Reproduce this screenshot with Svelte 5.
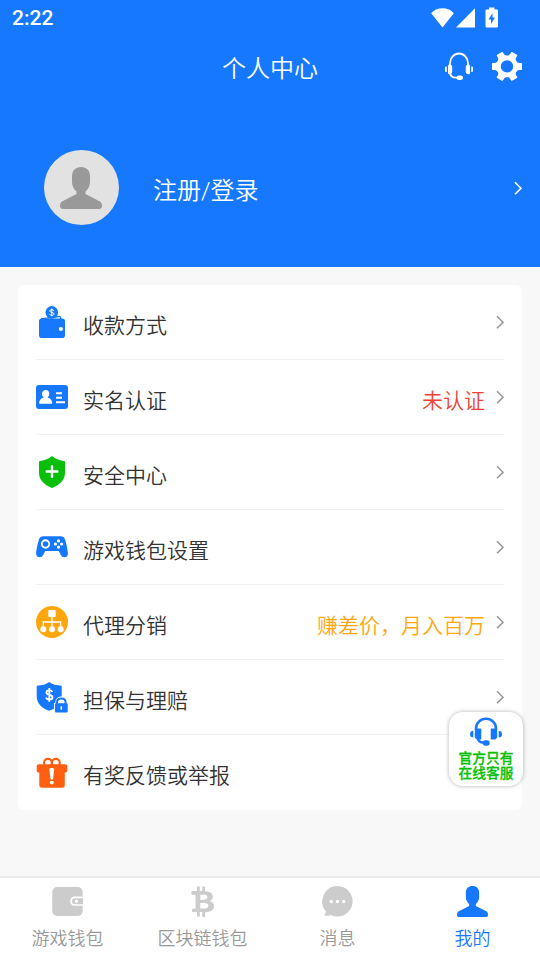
<script lang="ts">
    const menu = [
        { icon: 'wallet', label: '收款方式' },
        { icon: 'idcard', label: '实名认证', note: '未认证', tone: 'red' },
        { icon: 'shield', label: '安全中心' },
        { icon: 'gamepad', label: '游戏钱包设置' },
        { icon: 'tree', label: '代理分销', note: '赚差价，月入百万', tone: 'orange' },
        { icon: 'guard', label: '担保与理赔' },
        { icon: 'gift', label: '有奖反馈或举报' },
    ];
    const tabs = [
        { icon: 'purse', label: '游戏钱包' },
        { icon: 'bitcoin', label: '区块链钱包' },
        { icon: 'chat', label: '消息' },
        { icon: 'person', label: '我的' },
    ];
    let active = $state(3);
</script>

{#snippet person()}
    <path d="M21 0C15.500 0 12 3.500 12 9.500v5.500c0 4 2 7.500 4.500 9.500v2.500L3 34c-2 1-3 2.500-3 4.500C0 41 1 42 3 42h36c2 0 3-1 3-3.500 0-2-1-3.500-3-4.500l-13.500-7v-2.500c2.500-2 4.500-5.500 4.500-9.500V9.500C30 3.500 26.500 0 21 0z" />
{/snippet}

{#snippet chevron()}
    <svg class="chevron" width="8" height="14" viewBox="0 0 8 14"><path d="M1 1.300l6 6-6 6" /></svg>
{/snippet}

<div class="page">
    <header>
        <div class="status">
            <span>2:22</span>
            <svg width="70" height="22" viewBox="0 0 70 22" fill="#fff">
                <path d="M11.500 21.500L.2 7.200C3 4.200 7 2.300 11.500 2.300S20 4.200 22.800 7.200z" />
                <path d="M44 2.300v19.200H25z" />
                <path fill-rule="evenodd" d="M58 1.500h5.500v2h2.200c.8 0 1.300.5 1.300 1.300v15.400c0 .8-.5 1.300-1.300 1.300h-9.900c-.8 0-1.300-.5-1.300-1.300V4.800c0-.8.5-1.300 1.300-1.300H58zM61.500 7l-4 6.500h2.500V18l4-6.500h-2.500z" />
            </svg>
        </div>
        <div class="titlebar">
            <h1>个人中心</h1>
            <div class="actions">
                <svg width="28" height="29" viewBox="0 0 28 29">
                    <path d="M5 15V11.500a9 10 0 0 1 18 0V15M5 20c0 4 2 5.700 6 5.700h3" fill="none" stroke="#fff" stroke-width="1.800" />
                    <path fill="#fff" d="M4.500 12.500c2 0 2.700 1 2.700 2.500v4.500c0 1.700-.8 2.700-2.700 2.700-.9 0-1.500-.5-1.500-1.500V14c0-1 .6-1.500 1.500-1.500zM23.500 12.500c-2 0-2.700 1-2.700 2.500v4.500c0 1.700.8 2.700 2.700 2.700.9 0 1.500-.5 1.500-1.500V14c0-1-.6-1.500-1.500-1.500zM0 15.500c0-.6.5-1 1.800-1v5.500C.5 20 0 19.600 0 19zM28 15.500c0-.6-.5-1-1.800-1v5.500c1.300 0 1.800-.4 1.800-1z" />
                    <rect x="11.500" y="23.500" width="6.500" height="4.500" rx="2.200" fill="#fff" />
                </svg>
                <svg width="30" height="30" viewBox="-15 -15.400 30 30">
                    <circle r="8.500" fill="none" stroke="#fff" stroke-width="4.600" />
                    {#each [0, 60, 120, 180, 240, 300] as angle}
                        <path fill="#fff" transform="rotate({angle})" d="M8-6.500c1.300 2 2.800 3 4.500 3h1.800c.5 0 .7.300.7.700v5.600c0 .4-.2.700-.7.700h-1.800c-1.700 0-3.200 1-4.500 3z" />
                    {/each}
                </svg>
            </div>
        </div>
        <div class="profile">
            <div class="avatar">
                <svg width="42" height="42" viewBox="0 0 42 42" fill="#999">{@render person()}</svg>
            </div>
            <span class="login">注册/登录</span>
            {@render chevron()}
        </div>
    </header>

    <main>
        {#each menu as item}
            <div class="row">
                <svg class="icon" width="32" height="32" viewBox="0 0 32 32">
                    {#if item.icon === 'wallet'}
                        <path d="M5 12.800l18-2.300c1.200-.1 1.700.6 1.700 1.500v1.500" fill="none" stroke="#1678ff" stroke-width="1.300" />
                        <circle cx="15.800" cy="6.400" r="6.300" fill="#1678ff" />
                        <path class="dollar" d="M18 4.800c-.4-.8-1.200-1.100-2.200-1.100-1.200 0-2 .5-2 1.300 0 2 4.200.8 4.200 2.900 0 .9-.9 1.400-2.100 1.400-1.100 0-2-.4-2.300-1.200M15.800 2.500v7.800" stroke-width="1" />
                        <rect x="3" y="12.500" width="26" height="19.500" rx="2.800" fill="#1678ff" />
                        <circle cx="24.900" cy="23" r="2.100" fill="#fff" />
                    {:else if item.icon === 'idcard'}
                        <rect y="4" width="32" height="24" rx="3" fill="#1678ff" />
                        <path fill="#fff" d="M9.700 9c2.200 0 3.600 1.500 3.600 3.800 0 1.600-.7 3-1.800 3.800 2.900.8 4.500 2.500 4.700 5.300 0 .5-.3.900-.9.900H4c-.6 0-.9-.4-.9-.9.200-2.800 1.800-4.500 4.700-5.300-1.100-.8-1.800-2.200-1.800-3.800C6 10.500 7.500 9 9.700 9z" />
                        <path d="M20 12.200h6M20 16.800h6M20 21.200h9" stroke="#fff" stroke-width="1.900" />
                    {:else if item.icon === 'shield'}
                        <path fill="#09bf09" d="M16 0c3.500 2.900 8 4.700 13 5.200V17c0 7-5.500 12-13 15C8.500 29 3 24 3 17V5.200C8 4.700 12.500 2.900 16 0z" />
                        <path d="M16 10.200v10.600M10.700 15.500h10.600" stroke="#fff" stroke-width="2.400" stroke-linecap="round" />
                    {:else if item.icon === 'gamepad'}
                        <path fill="#1678ff" d="M7.500 5.300h17c2.700 0 4.200 1.500 4.800 4 1.200 4.400 2.400 9 2.600 13 .1 2.500-1.400 4-3.500 4-1.700 0-2.900-.8-3.700-2.500l-2-3.800H9.300l-2 3.800c-.8 1.700-2 2.500-3.700 2.500-2.100 0-3.600-1.500-3.500-4 .2-4 1.400-8.600 2.600-13 .6-2.500 2.100-4 4.800-4z" />
                        <circle cx="9.500" cy="13" r="3.700" fill="none" stroke="#fff" stroke-width="1.900" />
                        <g fill="#fff"><circle cx="22.500" cy="9.900" r="1.600" /><circle cx="22.500" cy="16.100" r="1.600" /><circle cx="19.400" cy="13" r="1.600" /><circle cx="25.600" cy="13" r="1.600" /></g>
                    {:else if item.icon === 'tree'}
                        <circle cx="16" cy="16" r="16" fill="#ffa60d" />
                        <rect x="12.300" y="4" width="7.400" height="7" rx="1" fill="#fff" />
                        <path d="M16 11v10M7.300 21v-5h17.400v5" fill="none" stroke="#fff" stroke-width="1.300" />
                        <g fill="#fff"><circle cx="7.300" cy="23.300" r="3" /><circle cx="16" cy="23.300" r="3" /><circle cx="24.700" cy="23.300" r="3" /></g>
                    {:else if item.icon === 'guard'}
                        <path fill="#1678ff" d="M13.200 1c3 2.300 7 3.500 12.500 3.700V15c0 7.500-5 12.300-12.500 14.800C5.700 27.300.7 22.500.7 15V4.700C6.200 4.500 10.200 3.300 13.200 1z" />
                        <path class="dollar" d="M16.300 11c-.5-1.200-1.500-1.700-3-1.700-1.800 0-2.900.8-2.900 2.200 0 3.200 6.100 1.500 6.100 4.700 0 1.500-1.300 2.300-3.100 2.300-1.700 0-2.900-.6-3.300-2M13.300 7v13.800" stroke-width="1.800" />
                        <path d="M18 32V22h1.300c.2-4 2.300-6.500 6-6.500s5.900 2.500 6.100 6.500H32v10z" fill="#fff" />
                        <rect x="19" y="22.300" width="12.700" height="9.200" rx="1" fill="#1678ff" />
                        <path d="M21 23v-1.500c0-2.500 1.700-4 4.300-4s4.300 1.500 4.300 4V23" fill="none" stroke="#1678ff" stroke-width="2" />
                        <path d="M25.300 25.300v3.300" stroke="#fff" stroke-width="1.600" />
                    {:else}
                        <g fill="none" stroke="#ff5f11" stroke-width="2.200"><circle cx="12" cy="6.800" r="4" /><circle cx="19.800" cy="6.800" r="4" /></g>
                        <path fill="#ff5f11" d="M3 8.300h26c1.500 0 2.300.9 2.300 2.200v4c0 1.300-.8 2.200-2.500 2.200v12.500c0 1.600-1 2.500-2.500 2.500H5.800c-1.500 0-2.500-.9-2.500-2.500V16.700C1.500 16.700.7 15.800.7 14.500v-4c0-1.300.8-2.200 2.300-2.200z" />
                        <path fill="#fff" d="M13.400 13.500c0-1 .8-1.500 2.400-1.500s2.400.5 2.400 1.500l-1.100 9c-.1.900-.5 1.300-1.300 1.300s-1.200-.4-1.300-1.300z" />
                        <circle cx="15.800" cy="26.600" r="1.900" fill="#fff" />
                    {/if}
                </svg>
                <span class="label">{item.label}</span>
                {#if item.note}<span class="note {item.tone}">{item.note}</span>{/if}
                {@render chevron()}
            </div>
        {/each}
    </main>

    <nav>
        {#each tabs as tab, i}
            <button class:active={i === active} onclick={() => (active = i)}>
                {#if tab.icon === 'person'}
                    <svg width="31" height="31" viewBox="0 0 42 42">{@render person()}</svg>
                {:else}
                    <svg width="31" height="31" viewBox="0 0 31 31">
                        {#if tab.icon === 'purse'}
                            <rect x=".3" y="1" width="30.400" height="29" rx="5" />
                            <path fill="#fff" d="M31 10.600h-8c-3 0-4.900 1.900-4.900 4.600s1.900 4.600 4.900 4.600h8z" />
                            <path d="M31 12.200h-7.800c-2 0-3.300 1.200-3.300 3s1.300 3 3.300 3H31z" />
                            <circle cx="24.500" cy="15.200" r="1.600" fill="#fff" />
                        {:else if tab.icon === 'bitcoin'}
                            <path fill-rule="evenodd" d="M10 .5h2.800V5h2.500V.5h2.800v4.700c4.800.3 7.700 2.100 7.700 5.500 0 2.200-1.200 3.700-3.200 4.400 2.800.6 4.400 2.400 4.400 5 0 4-3.200 6-8.900 6.300v4.600h-2.800V26h-2.500v4.500H10V26H4.700l.7-3.300h2.200c.7 0 1-.4 1-1V10c0-.8-.4-1.200-1.200-1.200H4.500V5H10zM13.300 8.700v5h3.200c2.500 0 3.900-.8 3.900-2.600s-1.400-2.400-3.900-2.400zM13.300 17v5.500h4c2.700 0 4.100-.9 4.100-2.800S20 17 17.300 17z" />
                        {:else}
                            <path d="M15.500 0a15.300 15.300 0 1 1-7 29c-1.700.9-4 1-5.500.6-.7-.2-.8-.6-.3-1.200.8-1 1.200-2 1.200-3.200A15.300 15.300 0 0 1 15.500 0z" />
                            <g fill="#fff"><circle cx="9.300" cy="15.500" r="1.700" /><circle cx="15.500" cy="15.500" r="1.700" /><circle cx="21.700" cy="15.500" r="1.700" /></g>
                        {/if}
                    </svg>
                {/if}
                <span>{tab.label}</span>
            </button>
        {/each}
    </nav>

    <div class="service">
        <svg width="32" height="29" viewBox="0 0 32 29">
            <path d="M6 13V11.300a10 9.500 0 0 1 20 0V13M7.500 20c.3 3.500 2 5.800 6.500 5.800h2" fill="none" stroke="#1678ff" stroke-width="2.600" />
            <path fill="#1678ff" d="M5 11.500h5.300c.6 0 1 .4 1 1v9c0 .6-.4 1-1 1H8c-2 0-3.300-1.300-3.300-3.500zM27 11.500h-5.300c-.6 0-1 .4-1 1v9c0 .6.4 1 1 1H24c2 0 3.300-1.300 3.300-3.500zM3.300 13.800v6.700C1.200 20.500 0 19.300 0 17.200s1.200-3.400 3.300-3.400zM28.700 13.800v6.700c2.100 0 3.300-1.200 3.300-3.300s-1.200-3.400-3.300-3.400z" />
            <rect x="12.700" y="23.300" width="7" height="5.500" rx="2.700" fill="#1678ff" />
        </svg>
        <span>官方只有</span>
        <span>在线客服</span>
    </div>
</div>

<style>
    :global(body) {
        margin: 0;
    }

    .page {
        position: relative;
        display: flex;
        flex-direction: column;
        width: 540px;
        height: 960px;
        overflow: hidden;
        background: #f8f8f8;
        font-family: Roboto, "Noto Sans CJK SC", sans-serif;
        font-weight: 350;
        color: #333;
    }

    svg {
        display: block;
        flex: none;
    }

    header {
        height: 267px;
        background: #1678ff;
        color: #fff;
    }

    .status {
        display: flex;
        justify-content: space-between;
        align-items: center;
        height: 36px;
        padding: 0 39px 0 12px;
        font: 500 21px/36px Roboto, sans-serif;
    }

    .status svg {
        margin-bottom: 3px;
    }

    .titlebar {
        display: grid;
        grid-template-columns: 1fr auto 1fr;
        align-items: center;
        height: 66px;
        padding-right: 18px;
        padding-left: 18px;
    }

    h1 {
        grid-column: 2;
        margin: 0;
        font-size: 24px;
        font-weight: inherit;
        line-height: 36px;
    }

    .actions {
        display: flex;
        align-items: center;
        justify-content: flex-end;
        gap: 19px;
        padding-bottom: 6px;
    }

    .profile {
        display: flex;
        align-items: center;
        height: 75px;
        margin-top: 48px;
        padding: 0 18px 0 43.5px;
    }

    .avatar {
        display: flex;
        align-items: center;
        justify-content: center;
        width: 75px;
        height: 75px;
        border-radius: 50%;
        background: #e2e2e2;
    }

    .login {
        flex: 1;
        margin-left: 34.5px;
        padding-top: 1px;
        font-size: 24px;
    }

    .chevron {
        fill: none;
        stroke: #999;
        stroke-width: 1.6;
    }

    .profile .chevron {
        stroke: #fff;
    }

    main {
        margin: 18px 18px 0;
        padding: 0 18px;
        border-radius: 6px;
        background: #fff;
    }

    .row {
        display: flex;
        align-items: center;
        box-sizing: border-box;
        height: 75px;
        border-bottom: 1px solid #f2f2f2;
        font-size: 21px;
    }

    .row:last-child {
        border-bottom-color: transparent;
    }

    .label {
        flex: 1;
        margin-left: 15px;
        padding-top: 4px;
    }

    .note {
        margin-right: 11px;
        padding-top: 4px;
    }

    .red {
        color: #f04134;
    }

    .orange {
        color: #ffa60d;
    }

    .dollar {
        fill: none;
        stroke: #fff;
    }

    nav {
        display: flex;
        box-sizing: border-box;
        height: 84px;
        margin-top: auto;
        border-top: 2px solid #ebebeb;
        background: #fff;
    }

    button {
        display: flex;
        flex: 1;
        flex-direction: column;
        align-items: center;
        padding: 8px 0 0;
        border: 0;
        background: none;
        color: #999;
        fill: #ccc;
        font: inherit;
        font-size: 18px;
        line-height: 26px;
    }

    button span {
        margin-top: 9px;
    }

    .active {
        color: #1678ff;
        fill: #1678ff;
    }

    .service {
        position: absolute;
        top: 712px;
        left: 449px;
        display: flex;
        flex-direction: column;
        align-items: center;
        box-sizing: border-box;
        width: 74px;
        height: 74px;
        padding-top: 5px;
        border-radius: 14px;
        background: #fff;
        box-shadow: 0 0 4px rgba(0, 0, 0, 0.3);
        color: #09bf09;
        font-size: 13.7px;
        font-weight: 500;
        line-height: 15px;
        -webkit-text-stroke: 0.3px;
    }

    .service svg {
        margin-bottom: 5px;
    }
</style>
